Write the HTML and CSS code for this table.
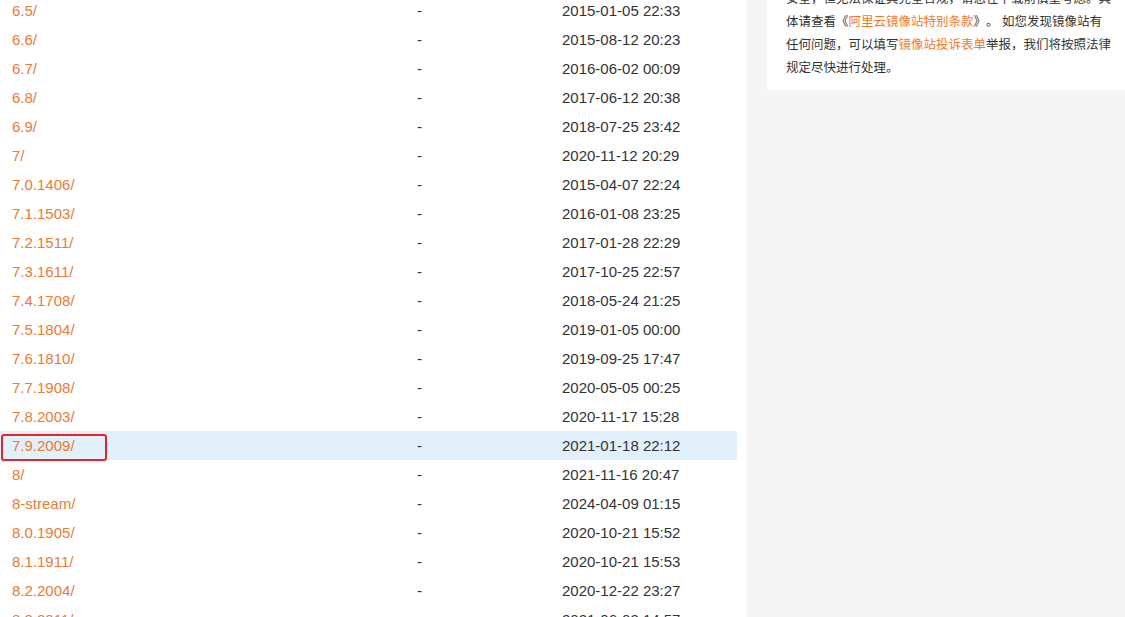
FILE: index.html
```html
<html>
    <head>
        <link rel="stylesheet" href="styles.css">
    </head>
    <body>
      <div class="page">
        <div class="listing">
            <div class="rows">
                <div class="row"><a href="#">6.5/</a><span>-</span><span>2015-01-05 22:33</span></div>
                <div class="row"><a href="#">6.6/</a><span>-</span><span>2015-08-12 20:23</span></div>
                <div class="row"><a href="#">6.7/</a><span>-</span><span>2016-06-02 00:09</span></div>
                <div class="row"><a href="#">6.8/</a><span>-</span><span>2017-06-12 20:38</span></div>
                <div class="row"><a href="#">6.9/</a><span>-</span><span>2018-07-25 23:42</span></div>
                <div class="row"><a href="#">7/</a><span>-</span><span>2020-11-12 20:29</span></div>
                <div class="row"><a href="#">7.0.1406/</a><span>-</span><span>2015-04-07 22:24</span></div>
                <div class="row"><a href="#">7.1.1503/</a><span>-</span><span>2016-01-08 23:25</span></div>
                <div class="row"><a href="#">7.2.1511/</a><span>-</span><span>2017-01-28 22:29</span></div>
                <div class="row"><a href="#">7.3.1611/</a><span>-</span><span>2017-10-25 22:57</span></div>
                <div class="row"><a href="#">7.4.1708/</a><span>-</span><span>2018-05-24 21:25</span></div>
                <div class="row"><a href="#">7.5.1804/</a><span>-</span><span>2019-01-05 00:00</span></div>
                <div class="row"><a href="#">7.6.1810/</a><span>-</span><span>2019-09-25 17:47</span></div>
                <div class="row"><a href="#">7.7.1908/</a><span>-</span><span>2020-05-05 00:25</span></div>
                <div class="row"><a href="#">7.8.2003/</a><span>-</span><span>2020-11-17 15:28</span></div>
                <div class="row hover"><a href="#">7.9.2009/</a><span>-</span><span>2021-01-18 22:12</span><i class="mark"></i></div>
                <div class="row"><a href="#">8/</a><span>-</span><span>2021-11-16 20:47</span></div>
                <div class="row"><a href="#">8-stream/</a><span>-</span><span>2024-04-09 01:15</span></div>
                <div class="row"><a href="#">8.0.1905/</a><span>-</span><span>2020-10-21 15:52</span></div>
                <div class="row"><a href="#">8.1.1911/</a><span>-</span><span>2020-10-21 15:53</span></div>
                <div class="row"><a href="#">8.2.2004/</a><span>-</span><span>2020-12-22 23:27</span></div>
                <div class="row"><a href="#">8.3.2011/</a><span>-</span><span>2021-06-03 14:57</span></div>
            </div>
        </div>
        <div class="side">
            <div class="notice">
                安全，但无法保证其完全合规，请您在下载前慎重考虑。具体请查看《<a href="#">阿里云镜像站特别条款</a>》。 如您发现镜像站有任何问题，可以填写<a href="#">镜像站投诉表单</a>举报，我们将按照法律规定尽快进行处理。
            </div>
        </div>
      </div>
    </body>
</html>
```
FILE: styles.css
```css
body{
    margin:0;
    background-color:#f5f5f5;
    font-family:"Liberation Sans","Noto Sans CJK SC",sans-serif;
    overflow:hidden;
}
a{
    text-decoration:none;
    color:#eb7a35;
}
.page{
    display:flex;
    height:617px;
}
.listing{
    width:737px;
    padding-right:10px;
    background-color:#fff;
}
.rows{
    margin-top:-4px;
}
.row{
    position:relative;
    display:grid;
    grid-template-columns:405px 145px 1fr;
    height:29px;
    line-height:30px;
    padding:0 12px;
    font-size:15px;
    color:#333;
}
.hover{
    background-color:#e1f0fa;
}
.mark{
    position:absolute;
    left:1px;
    top:3px;
    width:102px;
    height:23px;
    border:2px solid #e3262a;
    border-radius:3px;
}
.side{
    flex:1;
    padding-left:20px;
}
.notice{
    margin-top:-12px;
    background-color:#fff;
    padding:0 11px 10px 19px;
    font-size:12.5px;
    line-height:23px;
    color:#333;
    text-spacing-trim:space-all;
}
.notice a{
    color:#f3792e;
}
```
